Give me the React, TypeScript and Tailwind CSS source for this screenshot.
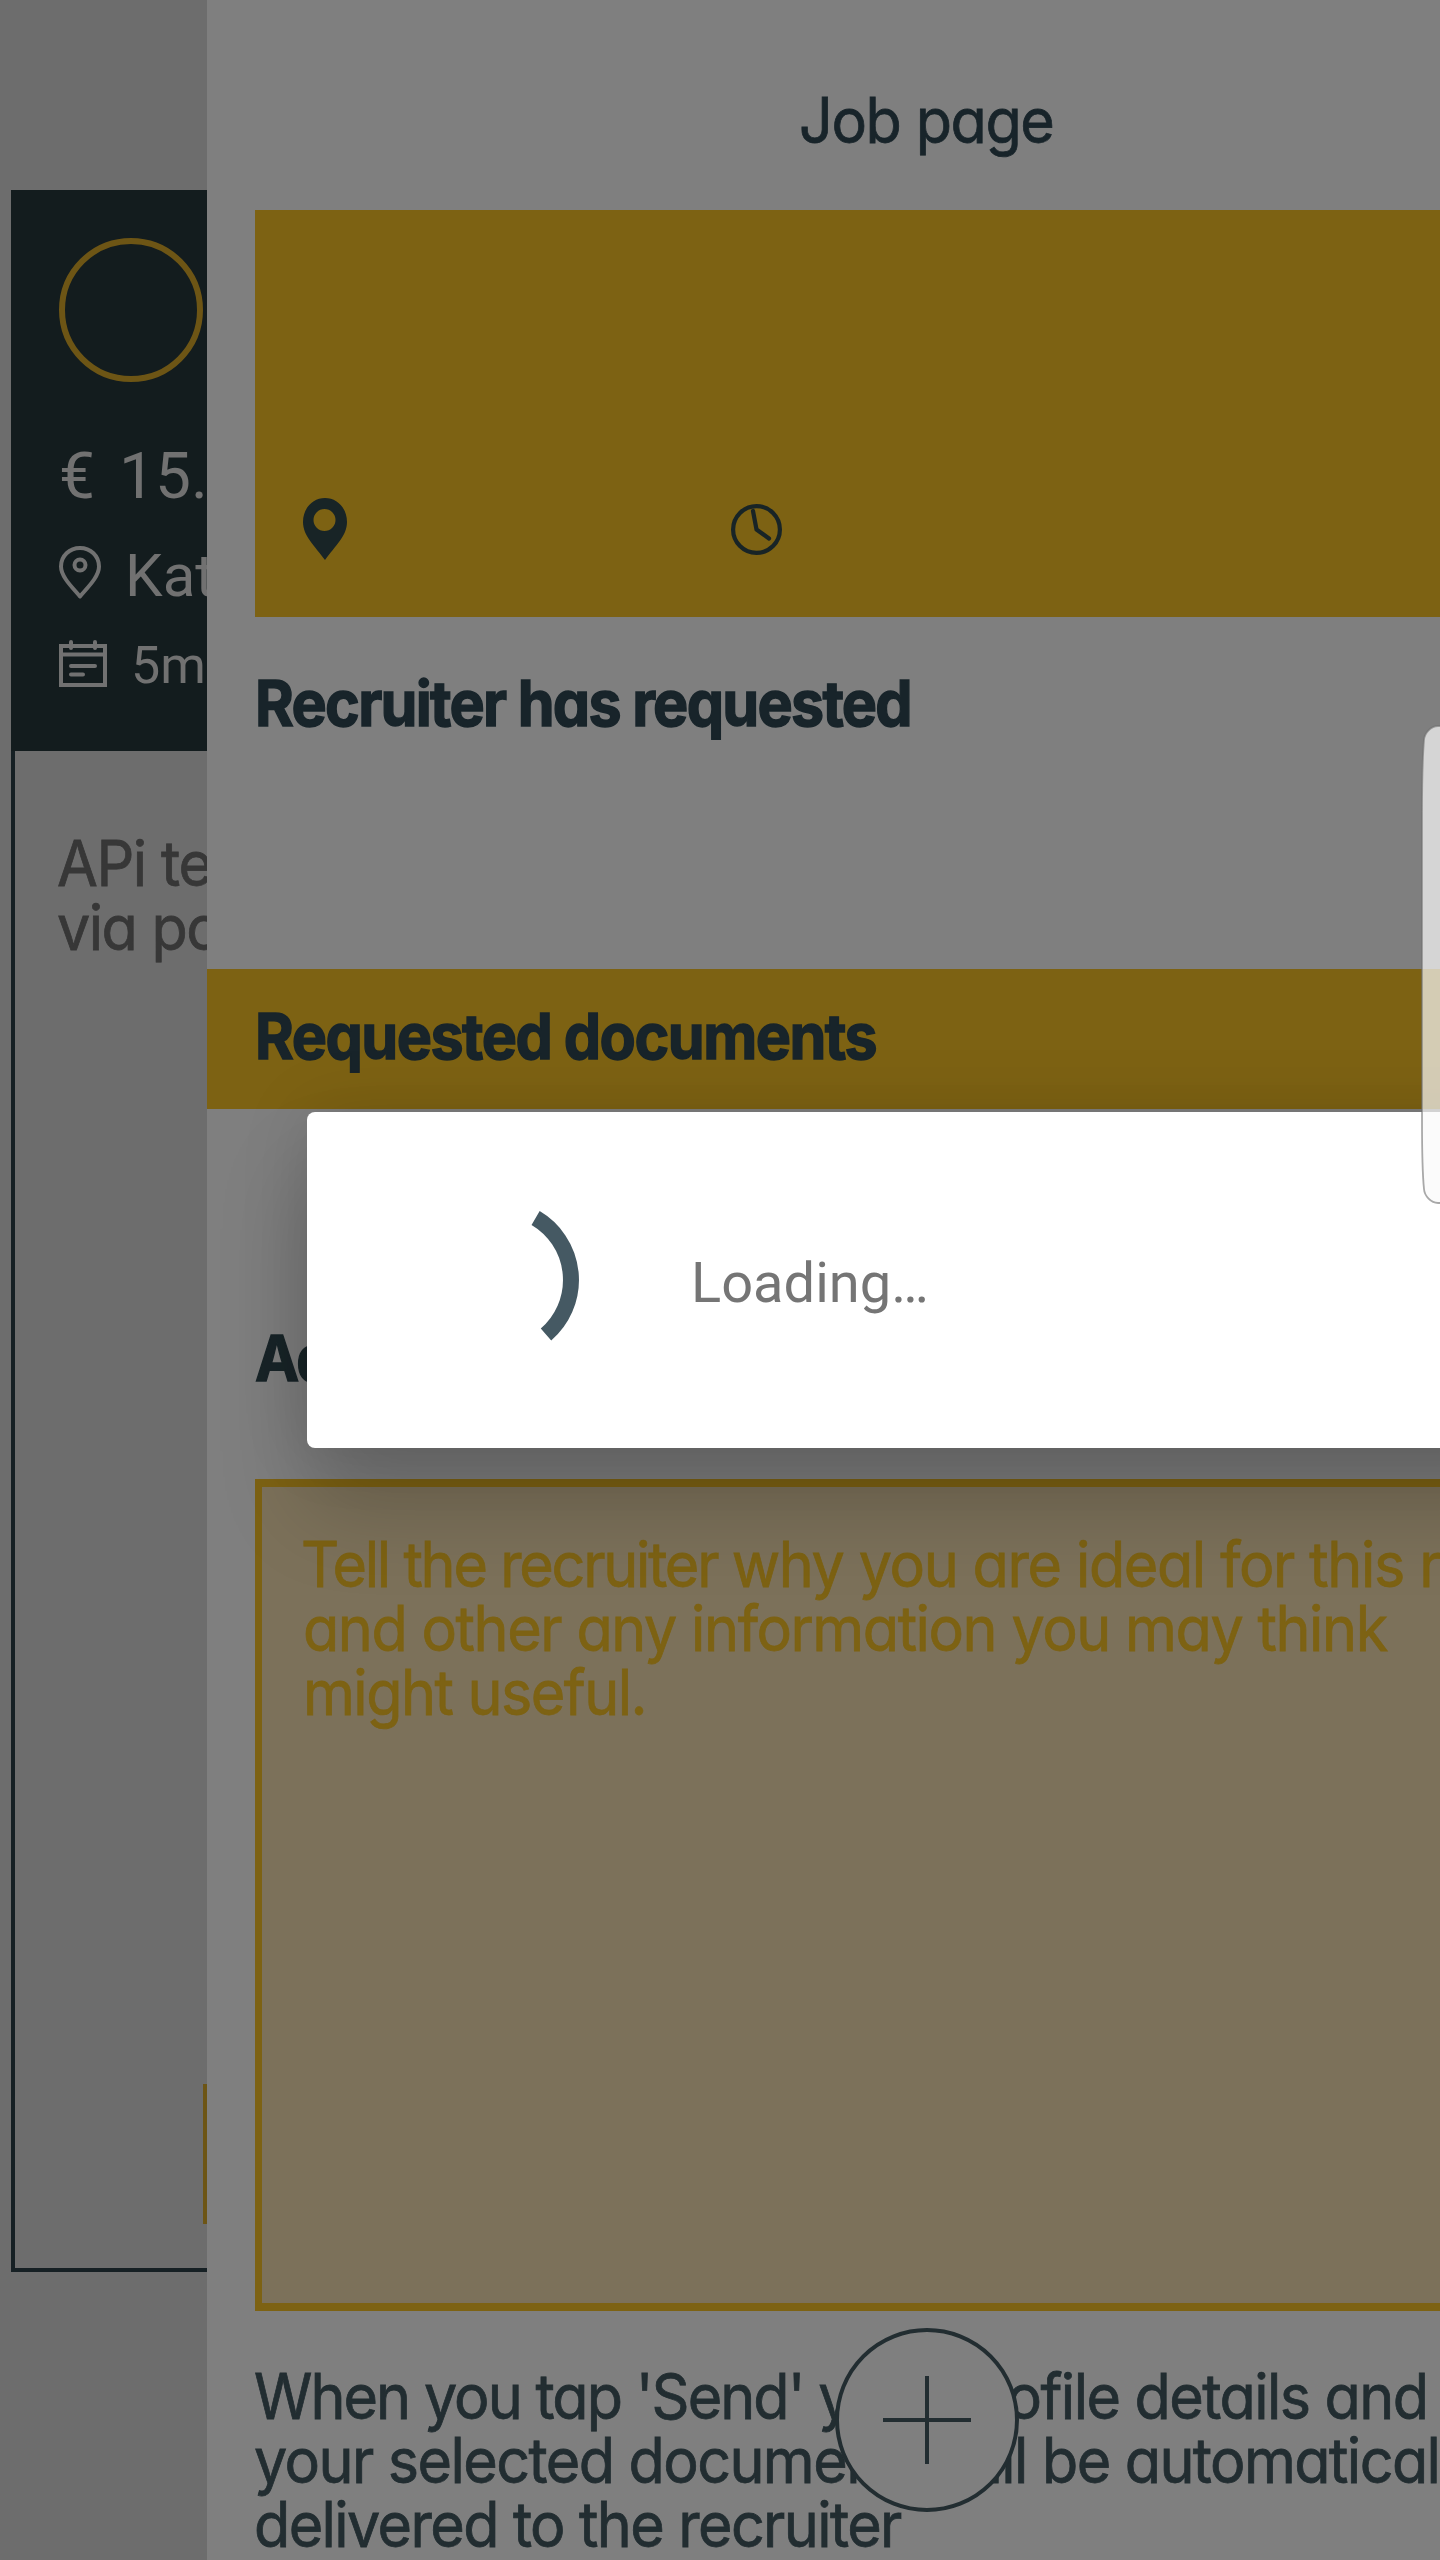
import type { ReactNode } from "react";

const ROUND =
  "font-['Inter',sans-serif] text-[63px] leading-[64px] whitespace-nowrap [font-feature-settings:'cv11'] ";

function Line({ className, children }: { className: string; children: ReactNode }) {
  return (
    <span className={"block w-max origin-left scale-x-94 [-webkit-text-stroke:0.8px_currentColor] " + className}>
      {children}
    </span>
  );
}

function BoldLine({ className, children }: { className: string; children: ReactNode }) {
  return (
    <span className={"block w-max origin-left scale-x-94 [-webkit-text-stroke:1.4px_currentColor] " + className}>
      {children}
    </span>
  );
}

function StatusCard() {
  return (
    <aside className="h-full w-[207px] shrink-0 overflow-hidden bg-[#6d6d6d] pt-[190px] pl-[11px]">
      <div className="flex h-[2082px] w-[1200px] flex-col border-4 border-[#162024]">
        <div className="-mx-1 -mt-1 h-[561px] shrink-0 bg-[#131c1e] pt-12 pl-12 font-['Roboto',sans-serif] text-[#717171]">
          <div className="size-36 rounded-full border-[6px] border-[#6d5515]" />
          <div className="mt-[59px] flex h-[72px] items-center text-[64px] leading-[72px] whitespace-nowrap">
            <span>€</span>
            <span className="ml-6">15.</span>
          </div>
          <div className="mt-[29px] flex h-[68px] items-center">
            <svg className="-mt-2 h-[53px] w-[42px]" viewBox="0 0 42 53" fill="none" stroke="#717171" strokeWidth="4">
              <path d="M21 50.5C14 42 2 31 2 20.500C2 10 10.500 2 21 2S40 10 40 20.500C40 31 28 42 21 50.500Z" strokeLinejoin="round" />
              <circle cx="21" cy="19" r="5.500" />
            </svg>
            <span className="ml-6 text-[60px] leading-[68px]">Kat</span>
          </div>
          <div className="mt-6 flex h-[64px] items-center">
            <svg className="-mt-[5px] h-12 w-12" viewBox="0 0 48 48" fill="none" stroke="#717171" strokeWidth="4">
              <path d="M2 6H46V45H2ZM2 14.500H46" />
              <path d="M12 2V8M36 2V8M12 26H36M12 34.500H24" strokeLinecap="round" />
            </svg>
            <span className="ml-6 text-[52px] leading-[64px]">5m</span>
          </div>
        </div>
        <div className={ROUND + "mt-[80px] ml-[42px] text-[#373737]"}>
          <Line className="tracking-[-1.5px]">APi te</Line>
          <Line className="tracking-[-1.6px]">via po</Line>
        </div>
        <div className="mt-auto mb-[44px] ml-[188px] h-[140px] w-[600px] border-4 border-[#6d5515]" />
      </div>
    </aside>
  );
}

function JobPage() {
  return (
    <main className="relative h-full w-[1440px] shrink-0 bg-[#7f7f7f]">
      <h1 className={ROUND + "flex h-[210px] justify-center pt-[88px] pr-[2px] text-[#18242a]"}>
        <span className="block scale-x-94 tracking-[-1.5px] [-webkit-text-stroke:0.8px_currentColor]">Job page</span>
      </h1>
      <section className="ml-12 flex h-[407px] items-end bg-[#7d6213] pb-[57px] pl-12">
        <svg className="h-[62px] w-[44px]" viewBox="0 0 44 62" fill="#182426">
          <path fillRule="evenodd" d="M22 0C34 0 44 10 44 24C44 38 32 48 22 62C12 48 0 38 0 24C0 10 10 0 22 0ZM21.500 11a11 11 0 1 0 0 22a11 11 0 1 0 0-22Z" />
        </svg>
        <svg className="mb-[5px] ml-[384px] size-[51px]" viewBox="0 0 51 51" fill="none" stroke="#182426" strokeWidth="4.200">
          <circle cx="25.500" cy="25.500" r="23.400" />
          <path d="M22 7L25.500 25.500L38 34.500" strokeLinecap="round" strokeLinejoin="round" />
        </svg>
      </section>
      <h2 className={ROUND + "mt-[54px] ml-12 h-[298px] font-bold text-[#18242a]"}>
        <BoldLine className="tracking-[-1.83px]">Recruiter has requested</BoldLine>
      </h2>
      <h2 className={ROUND + "h-[140px] bg-[#7d6213] pt-[35px] pl-12 font-bold text-[#18242a]"}>
        <BoldLine className="tracking-[-1.6px]">Requested documents</BoldLine>
      </h2>
      <h2 className={ROUND + "mt-[217px] ml-12 h-[153px] font-bold text-[#182428]"}>
        <BoldLine className="tracking-[-1.6px]">Additional information</BoldLine>
      </h2>
      <div className={ROUND + "ml-12 h-[832px] border-x-[7px] border-y-8 border-[#7d6213] bg-[#7c715a] pt-[45px] pl-[41px] text-[#7d6213]"}>
        <Line className="-ml-[2px] tracking-[-1.45px]">
          <span className="tracking-[-2.35px]">Tell the recruiter </span>why you are ideal for this r
        </Line>
        <Line className="tracking-[-1.5px]">and other any information you may think</Line>
        <Line className="tracking-[-1.6px]">might useful.</Line>
      </div>
      <div className={ROUND + "mt-[53px] ml-12 text-[#222d31]"}>
        <Line className="-ml-px tracking-[-1.65px]">
          <span className="tracking-[-2.05px]">When you tap 'Send' </span>your profile details and
        </Line>
        <Line className="-ml-px tracking-[-1.66px]">your selected documents will be automatical</Line>
        <Line className="-ml-px tracking-[-1.7px]">delivered to the recruiter</Line>
      </div>
      <button className="absolute top-[2328px] left-[628px] size-[184px] rounded-full border-4 border-[#222d31] bg-[#7f7f7f]">
        <svg className="size-full" viewBox="0 0 176 176" stroke="#222d31" strokeWidth="4">
          <path d="M88 44V132M44 88H132" />
        </svg>
      </button>
    </main>
  );
}

function LoadingDialog() {
  return (
    <div className="absolute top-[1112px] left-[307px] flex h-[336px] w-[1240px] items-center rounded-lg bg-white pl-[112px] shadow-[0_60px_90px_rgba(0,0,0,0.19),0_0_70px_rgba(0,0,0,0.12)]">
      <svg className="size-40 overflow-visible" viewBox="0 0 160 160" fill="none" stroke="#455963" strokeWidth="16">
        <path d="M116.600 18A72 72 0 0 1 127 134.500" />
      </svg>
      <span className="mt-1.5 ml-[112px] font-['Roboto',sans-serif] text-[56px] leading-[66px] text-[#757575]">
        Loading…
      </span>
    </div>
  );
}

function EdgeHandle() {
  return (
    <svg className="absolute top-[724px] left-[1420px] h-[481px] w-5" viewBox="0 0 20 481">
      <path
        d="M24 2H18C11 2 4.500 9 4 16Q2 40 2 90V396Q2 446 4 465C4.500 472 11 479 18 479H24Z"
        fill="#f9f9f9"
        fillOpacity="0.700"
        stroke="#707070"
        strokeOpacity="0.600"
        strokeWidth="1.800"
      />
    </svg>
  );
}

export default function App() {
  return (
    <div className="relative flex h-[2560px] w-[1440px] overflow-hidden bg-[#6d6d6d]">
      <StatusCard />
      <JobPage />
      <LoadingDialog />
      <EdgeHandle />
    </div>
  );
}
